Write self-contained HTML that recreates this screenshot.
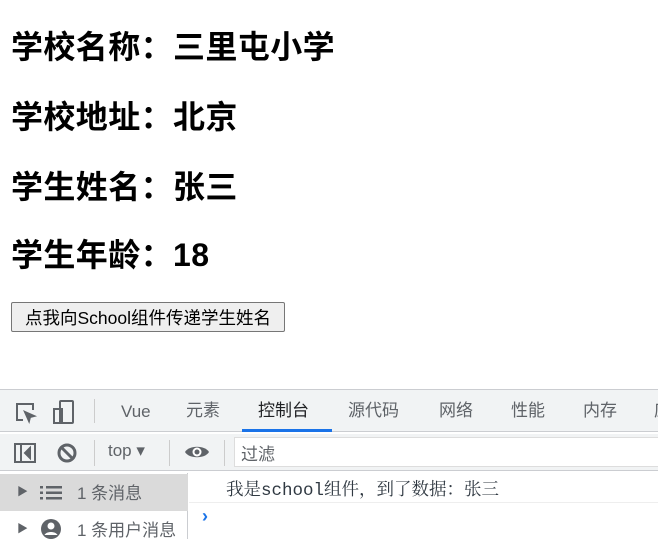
<!DOCTYPE html>
<html><head><meta charset="utf-8"><style>
*{margin:0;padding:0;box-sizing:border-box}
body{width:658px;height:538px;overflow:hidden;background:#fff;font-family:"Liberation Sans","Noto Sans CJK SC",sans-serif;position:relative}
h2{position:absolute;left:11px;font-size:32px;font-weight:bold;line-height:36px;color:#000;letter-spacing:0.4px}
button{position:absolute;left:11px;top:302px;width:274px;height:30px;font-size:17.5px;font-family:"Liberation Sans","Noto Sans CJK SC",sans-serif;background:#efefef;border:1px solid #767676;border-radius:2px;color:#000;white-space:nowrap;padding:0}
.dt{position:absolute;left:0;top:389px;width:658px;height:149px;border-top:1px solid #cbcdd1;background:#fff}
.tabs{height:42px;background:#f1f3f4;border-bottom:1px solid #cbcdd1;position:relative;font-size:17px;color:#5f6368}
.tabs span{position:absolute;top:9px;line-height:24px}
.tb{height:37px;background:#f1f3f4;border-bottom:1px solid #cbcdd1;position:relative;top:2px;font-size:17px;color:#5f6368}
.side{position:absolute;left:0;top:83px;width:188px;height:66px;border-right:1px solid #cbcdd1;background:#fff;font-size:17px;color:#303942}
.txt{position:absolute;font-size:17.5px}
</style></head><body>
<h2 style="top:29px">学校名称：三里屯小学</h2>
<h2 style="top:99px">学校地址：北京</h2>
<h2 style="top:169px">学生姓名：张三</h2>
<h2 style="top:237px">学生年龄：18</h2>
<button>点我向School组件传递学生姓名</button>
<div class="dt">
 <div class="tabs">
  <svg style="position:absolute;left:14px;top:11px" width="24" height="24" viewBox="0 0 24 24" fill="none" stroke="#5f6368" stroke-width="2"><path d="M9 19H3V3h16v6"/><path d="M11 11l9 4-4 1-1 4z" fill="#5f6368"/></svg>
  <svg style="position:absolute;left:52px;top:9px" width="24" height="26" viewBox="0 0 24 26" fill="none" stroke="#5f6368" stroke-width="2"><rect x="8" y="2" width="13" height="22" rx="1"/><rect x="2" y="10" width="8" height="14"/></svg>
  <div style="position:absolute;left:94px;top:9px;width:1px;height:24px;background:#ccc"></div>
  <span style="left:121px;top:10px">Vue</span>
  <span style="left:186px">元素</span>
  <span style="left:258px;color:#202124">控制台</span>
  <div style="position:absolute;left:242px;top:39px;width:90px;height:3px;background:#1a73e8"></div>
  <span style="left:348px">源代码</span>
  <span style="left:439px">网络</span>
  <span style="left:511px">性能</span>
  <span style="left:583px">内存</span>
  <span style="left:654px">应</span>
 </div>
 <div class="tb">
  <svg style="position:absolute;left:13px;top:8px" width="24" height="22" viewBox="0 0 24 22" fill="none" stroke="#5f6368" stroke-width="2"><rect x="2" y="2" width="20" height="18"/><path d="M8 2v18"/><path d="M17 6l-5 5 5 5z" fill="#5f6368"/></svg>
  <svg style="position:absolute;left:56px;top:8px" width="22" height="22" viewBox="0 0 22 22" fill="none" stroke="#5f6368" stroke-width="3"><circle cx="11" cy="11" r="8"/><path d="M5 5l12 12"/></svg>
  <div style="position:absolute;left:94px;top:6px;width:1px;height:26px;background:#ccc"></div>
  <span style="position:absolute;left:108px;top:7px">top ▾</span>
  <div style="position:absolute;left:169px;top:6px;width:1px;height:26px;background:#ccc"></div>
  <svg style="position:absolute;left:184px;top:9px" width="26" height="18" viewBox="0 0 26 18"><path d="M1 9C5 2 21 2 25 9C21 16 5 16 1 9z" fill="#5f6368"/><circle cx="13" cy="9" r="4.5" fill="#fff"/><circle cx="13" cy="9" r="2.5" fill="#5f6368"/></svg>
  <div style="position:absolute;left:224px;top:6px;width:1px;height:26px;background:#ccc"></div>
  <div style="position:absolute;left:234px;top:3px;width:430px;height:30px;background:#fff;border:1px solid #ddd;padding:2px 6px;color:#5f6368">过滤</div>
 </div>
 <div class="side">
  <div style="position:absolute;left:0;top:1px;width:188px;height:37px;background:#dadada"></div>
  <span style="position:absolute;left:17px;top:10px;font-size:11px;color:#5f6368">▶</span>
  <svg style="position:absolute;left:40px;top:13px" width="22" height="14" viewBox="0 0 22 14" fill="#5f6368"><rect x="0" y="0" width="3" height="2.5"/><rect x="6" y="0" width="16" height="2.5"/><rect x="0" y="5.5" width="3" height="2.5"/><rect x="6" y="5.5" width="16" height="2.5"/><rect x="0" y="11" width="3" height="2.5"/><rect x="6" y="11" width="16" height="2.5"/></svg>
  <span style="position:absolute;left:77px;top:6px;color:#5f6368">1 条消息</span>
  <span style="position:absolute;left:17px;top:47px;font-size:11px;color:#5f6368">▶</span>
  <svg style="position:absolute;left:40px;top:45px" width="22" height="22" viewBox="0 0 22 22"><circle cx="11" cy="11" r="10" fill="#5f6368"/><circle cx="11" cy="8" r="3.5" fill="#fff"/><path d="M4.5 17c2-4 11-4 13 0" fill="#fff"/></svg>
  <span style="position:absolute;left:77px;top:43px;color:#5f6368">1 条用户消息</span>
 </div>
 <div style="position:absolute;left:189px;top:83px;width:469px;height:30px;border-bottom:1px solid #eee"></div>
 <span class="txt" style="left:226px;top:86px;font-family:'Liberation Mono','Noto Serif CJK SC',monospace;color:#303942">我是school组件，到了数据：张三</span>
 <span style="position:absolute;left:202px;top:116px;color:#1a73e8;font-size:18px;font-weight:bold">›</span>
</div>
</body></html>
